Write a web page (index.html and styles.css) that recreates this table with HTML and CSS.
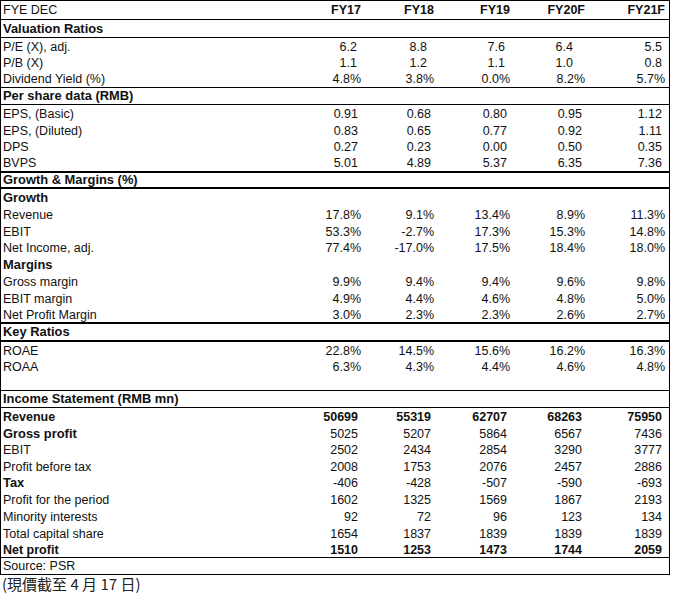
FILE: index.html
```html
<!DOCTYPE html>
<html>
<head>
<meta charset="utf-8">
<link rel="stylesheet" href="styles.css">
</head>
<body>
<div class="sheet">
  <div class="row h19 b1"><span class="lbl">FYE DEC</span><span class="num hd">FY17</span><span class="num hd">FY18</span><span class="num hd">FY19</span><span class="num hd">FY20F</span><span class="num hd">FY21F</span></div>
  <div class="row h18 b1"><span class="lbl bold">Valuation Ratios</span></div>
  <div class="row h17 val"><span class="lbl">P/E (X), adj.</span><span class="num">6.2</span><span class="num">8.8</span><span class="num">7.6</span><span class="num">6.4</span><span class="num">5.5</span></div>
  <div class="row h16 val"><span class="lbl">P/B (X)</span><span class="num">1.1</span><span class="num">1.2</span><span class="num">1.1</span><span class="num">1.0</span><span class="num">0.8</span></div>
  <div class="row h17 b1"><span class="lbl">Dividend Yield (%)</span><span class="num pct">4.8%</span><span class="num pct">3.8%</span><span class="num pct">0.0%</span><span class="num pct">8.2%</span><span class="num pct">5.7%</span></div>

  <div class="row h17 b1"><span class="lbl bold">Per share data (RMB)</span></div>
  <div class="row h17"><span class="lbl">EPS, (Basic)</span><span class="num">0.91</span><span class="num">0.68</span><span class="num">0.80</span><span class="num">0.95</span><span class="num">1.12</span></div>
  <div class="row h17"><span class="lbl">EPS, (Diluted)</span><span class="num">0.83</span><span class="num">0.65</span><span class="num">0.77</span><span class="num">0.92</span><span class="num">1.11</span></div>
  <div class="row h16"><span class="lbl">DPS</span><span class="num">0.27</span><span class="num">0.23</span><span class="num">0.00</span><span class="num">0.50</span><span class="num">0.35</span></div>
  <div class="row h18 b2"><span class="lbl">BVPS</span><span class="num">5.01</span><span class="num">4.89</span><span class="num">5.37</span><span class="num">6.35</span><span class="num">7.36</span></div>

  <div class="row h16 b2"><span class="lbl bold">Growth &amp; Margins (%)</span></div>
  <div class="row h17"><span class="lbl bold">Growth</span></div>
  <div class="row h17"><span class="lbl">Revenue</span><span class="num pct">17.8%</span><span class="num pct">9.1%</span><span class="num pct">13.4%</span><span class="num pct">8.9%</span><span class="num pct">11.3%</span></div>
  <div class="row h17"><span class="lbl">EBIT</span><span class="num pct">53.3%</span><span class="num pct">-2.7%</span><span class="num pct">17.3%</span><span class="num pct">15.3%</span><span class="num pct">14.8%</span></div>
  <div class="row h16"><span class="lbl">Net Income, adj.</span><span class="num pct">77.4%</span><span class="num pct">-17.0%</span><span class="num pct">17.5%</span><span class="num pct">18.4%</span><span class="num pct">18.0%</span></div>
  <div class="row h17"><span class="lbl bold">Margins</span></div>
  <div class="row h17"><span class="lbl">Gross margin</span><span class="num pct">9.9%</span><span class="num pct">9.4%</span><span class="num pct">9.4%</span><span class="num pct">9.6%</span><span class="num pct">9.8%</span></div>
  <div class="row h17"><span class="lbl">EBIT margin</span><span class="num pct">4.9%</span><span class="num pct">4.4%</span><span class="num pct">4.6%</span><span class="num pct">4.8%</span><span class="num pct">5.0%</span></div>
  <div class="row h17 b2"><span class="lbl">Net Profit Margin</span><span class="num pct">3.0%</span><span class="num pct">2.3%</span><span class="num pct">2.3%</span><span class="num pct">2.6%</span><span class="num pct">2.7%</span></div>

  <div class="row h18 b2"><span class="lbl bold">Key Ratios</span></div>
  <div class="row h17"><span class="lbl">ROAE</span><span class="num pct">22.8%</span><span class="num pct">14.5%</span><span class="num pct">15.6%</span><span class="num pct">16.2%</span><span class="num pct">16.3%</span></div>
  <div class="row h16"><span class="lbl">ROAA</span><span class="num pct">6.3%</span><span class="num pct">4.3%</span><span class="num pct">4.4%</span><span class="num pct">4.6%</span><span class="num pct">4.8%</span></div>
  <div class="row h16 b1"><span class="lbl"></span></div>

  <div class="row h17 b1"><span class="lbl bold">Income Statement (RMB mn)</span></div>
  <div class="row h17 strong"><span class="lbl">Revenue</span><span class="num">50699</span><span class="num">55319</span><span class="num">62707</span><span class="num">68263</span><span class="num">75950</span></div>
  <div class="row h17"><span class="lbl bold">Gross profit</span><span class="num">5025</span><span class="num">5207</span><span class="num">5864</span><span class="num">6567</span><span class="num">7436</span></div>
  <div class="row h16"><span class="lbl">EBIT</span><span class="num">2502</span><span class="num">2434</span><span class="num">2854</span><span class="num">3290</span><span class="num">3777</span></div>
  <div class="row h17"><span class="lbl">Profit before tax</span><span class="num">2008</span><span class="num">1753</span><span class="num">2076</span><span class="num">2457</span><span class="num">2886</span></div>
  <div class="row h16"><span class="lbl bold">Tax</span><span class="num">-406</span><span class="num">-428</span><span class="num">-507</span><span class="num">-590</span><span class="num">-693</span></div>
  <div class="row h17"><span class="lbl">Profit for the period</span><span class="num">1602</span><span class="num">1325</span><span class="num">1569</span><span class="num">1867</span><span class="num">2193</span></div>
  <div class="row h17"><span class="lbl">Minority interests</span><span class="num">92</span><span class="num">72</span><span class="num">96</span><span class="num">123</span><span class="num">134</span></div>
  <div class="row h17"><span class="lbl">Total capital share</span><span class="num">1654</span><span class="num">1837</span><span class="num">1839</span><span class="num">1839</span><span class="num">1839</span></div>
  <div class="row h16 b1 strong"><span class="lbl">Net profit</span><span class="num">1510</span><span class="num">1253</span><span class="num">1473</span><span class="num">1744</span><span class="num">2059</span></div>
  <div class="row h17 b1"><span class="lbl">Source: PSR</span></div>
</div>
<div class="note">(現價截至 4 月 17 日)</div>
</body>
</html>
```

FILE: styles.css
```css
html, body {
  margin: 0;
  padding: 0;
  background: #ffffff;
}

body {
  font-family: "Liberation Sans", Arial, sans-serif;
  font-size: 12.5px;
  color: #111111;
}

.sheet {
  width: 670px;
  box-sizing: border-box;
  border: 1px solid #000000;
  border-bottom: none;
}

.row {
  display: grid;
  grid-template-columns: 289px 75px 73px 76px 75px 80px;
  align-items: center;
  box-sizing: border-box;
  line-height: 14px;
  white-space: nowrap;
}

.h16 { height: 16px; }
.h17 { height: 17px; }
.h18 { height: 18px; }
.h19 { height: 19px; }

.b1 { border-bottom: 1px solid #000000; }
.b2 { border-bottom: 2px solid #000000; }

.lbl {
  padding-left: 2px;
}

.bold { font-weight: bold; font-size: 12.9px; }
.strong { font-weight: bold; }

.num {
  text-align: right;
  padding-right: 7px;
}

.num.pct,
.num.hd {
  padding-right: 4px;
}

.num.hd { font-weight: bold; }

.val .num:nth-child(2) { padding-right: 8px; }
.val .num:nth-child(3) { padding-right: 11px; }
.val .num:nth-child(4) { padding-right: 9px; }
.val .num:nth-child(5) { padding-right: 16px; }
.val .num:nth-child(6) { padding-right: 7px; }

.note {
  font-family: "Noto Sans CJK TC", "Liberation Sans", sans-serif;
  font-size: 15px;
  line-height: 18px;
  padding-left: 2px;
  color: #222222;
}
```
